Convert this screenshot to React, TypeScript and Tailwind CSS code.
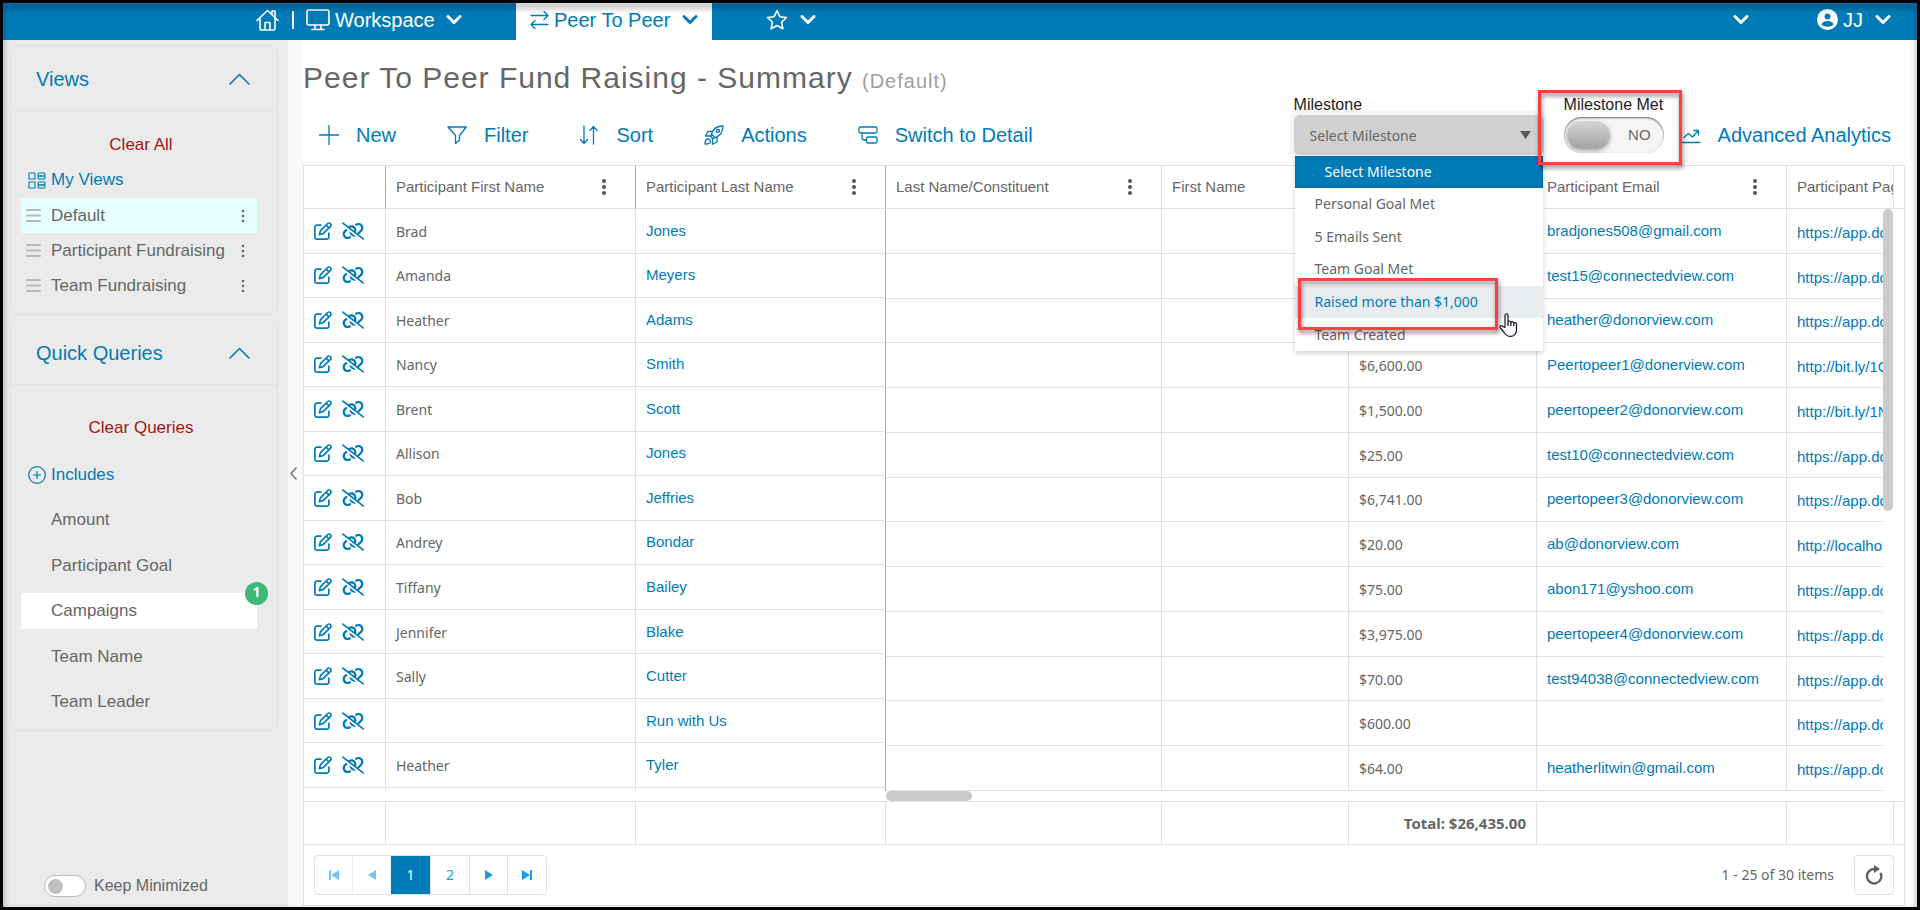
import { useState } from "react";
import type { ReactNode } from "react";
import { FaLinkSlash, FaRegPenToSquare } from "react-icons/fa6";

const SANS = "font-['Liberation_Sans',Arial,sans-serif]";
const NOTO = "font-['Noto_Sans',sans-serif]";

const rows = [
    { first: "Brad", last: "Jones", amount: "", email: "bradjones508@gmail.com", page: "https://app.donorview.com" },
    { first: "Amanda", last: "Meyers", amount: "", email: "test15@connectedview.com", page: "https://app.donorview.com" },
    { first: "Heather", last: "Adams", amount: "", email: "heather@donorview.com", page: "https://app.donorview.com" },
    { first: "Nancy", last: "Smith", amount: "$6,600.00", email: "Peertopeer1@donerview.com", page: "http://bit.ly/1OqTz" },
    { first: "Brent", last: "Scott", amount: "$1,500.00", email: "peertopeer2@donorview.com", page: "http://bit.ly/1NqTz" },
    { first: "Allison", last: "Jones", amount: "$25.00", email: "test10@connectedview.com", page: "https://app.donorview.com" },
    { first: "Bob", last: "Jeffries", amount: "$6,741.00", email: "peertopeer3@donorview.com", page: "https://app.donorview.com" },
    { first: "Andrey", last: "Bondar", amount: "$20.00", email: "ab@donorview.com", page: "http://localhost" },
    { first: "Tiffany", last: "Bailey", amount: "$75.00", email: "abon171@yshoo.com", page: "https://app.donorview.com" },
    { first: "Jennifer", last: "Blake", amount: "$3,975.00", email: "peertopeer4@donorview.com", page: "https://app.donorview.com" },
    { first: "Sally", last: "Cutter", amount: "$70.00", email: "test94038@connectedview.com", page: "https://app.donorview.com" },
    { first: "", last: "Run with Us", amount: "$600.00", email: "", page: "https://app.donorview.com" },
    { first: "Heather", last: "Tyler", amount: "$64.00", email: "heatherlitwin@gmail.com", page: "https://app.donorview.com" },
];

const milestones = ["Personal Goal Met", "5 Emails Sent", "Team Goal Met", "Raised more than $1,000", "Team Created"];

function Svg({ w = 20, h = 20, sw = 1.3, className = "", children }: { w?: number, h?: number, sw?: number, className?: string, children: ReactNode }) {
    return (
        <svg width={w} height={h} viewBox={`0 0 ${w} ${h}`} fill="none" stroke="currentColor" strokeWidth={sw} strokeLinecap="round" strokeLinejoin="round" className={`shrink-0 ${className}`} aria-hidden="true">
            {children}
        </svg>
    )
}

function ChevronDown() {
    return <Svg w={16} h={11} sw={3}><path d="M2 2.5 8 8.5 14 2.5" /></Svg>
}

function TopBar() {
    return (
        <header className="flex h-[37px] shrink-0 items-stretch bg-[#007bb8] text-xl leading-6 text-white">
            <nav className="flex flex-1 items-stretch pl-[253px]">
                <div className="flex w-[260px] items-center pb-1">
                    <a href="#home" aria-label="Home">
                        <Svg w={23} h={22} sw={1.6}>
                            <path d="M1 11.5 11.5 1.5 22 11.5M4 9v10.5a1.5 1.5 0 0 0 1.5 1.5h12a1.5 1.5 0 0 0 1.5-1.5V9M9 21v-7.5h5V21M16 5.5V2h3v6.500" />
                        </Svg>
                    </a>
                    <span className="ml-[13px] h-[18px] w-[2px] bg-white" />
                    <button className="ml-3 flex items-center">
                        <Svg w={24} h={22} sw={1.6}>
                            <rect x="1" y="1" width="22" height="15" rx="2" />
                            <path d="M9 16v4M15 16v4M6 20.500h12" />
                        </Svg>
                        <span className="ml-[5px] mr-[11px]">Workspace</span>
                        <ChevronDown />
                    </button>
                </div>
                <button className="flex w-[196px] items-center bg-white pb-1 pl-3.5 text-[#007bb8]">
                    <Svg w={19} h={20}>
                        <path d="M1 5.500h17M14 1.500l4 4-4 4M18 14.500H1M5 10.500l-4 4 4 4" />
                    </Svg>
                    <span className="ml-[5px] mr-3">Peer To Peer</span>
                    <ChevronDown />
                </button>
                <button className="ml-[54px] flex items-center gap-3 pb-1" aria-label="Favorites">
                    <Svg w={22} h={22} sw={1.6}>
                        <path d="m11 1.500 2.900 6.200 6.600.8-4.900 4.600 1.300 6.700L11 16.500l-5.900 3.300 1.300-6.700L1.500 8.500l6.600-.8z" />
                    </Svg>
                    <ChevronDown />
                </button>
            </nav>
            <div className="flex items-center pb-1 pr-[26px]">
                <button aria-label="More"><ChevronDown /></button>
                <button className="ml-[68px] flex items-center">
                    <svg width="21" height="21" viewBox="0 0 21 21" aria-hidden="true">
                        <circle cx="10.500" cy="10.500" r="10.500" fill="#fff" />
                        <circle cx="10.500" cy="7.500" r="3" fill="#007bb8" />
                        <path d="M4.500 15.500c1-3 3-3.500 6-3.500s5 .5 6 3.500c-3 3-9 3-12 0z" fill="#007bb8" />
                    </svg>
                    <span className="ml-[5px] mr-3">JJ</span>
                    <ChevronDown />
                </button>
            </div>
        </header>
    )
}

function PanelHeader({ title }: { title: string }) {
    return (
        <button className="flex h-[65px] w-full items-center justify-between border-b border-[#dfe1e6] pl-[25px] pr-[27px] pt-0.5 text-xl text-[#007bb8]">
            {title}
            <Svg w={21} h={12} sw={1.6}><path d="M1 11 10.500 1.500 20 11" /></Svg>
        </button>
    )
}

function ViewItem({ label, active = false }: { label: string, active?: boolean }) {
    return (
        <li className={`flex h-[35px] items-center pl-[5px] pr-3 ${active ? "bg-[#e6ffff]" : ""}`}>
            <Svg w={15} h={13} sw={2} className="text-[#b9b9b9]"><path d="M1 1h13M1 6.500h13M1 12h13" /></Svg>
            <a href="#view" className="ml-2.5 flex-1">{label}</a>
            <button aria-label={`${label} options`}>
                <svg width="4" height="14" viewBox="0 0 4 14" fill="#666" aria-hidden="true"><circle cx="2" cy="2" r="1.300" /><circle cx="2" cy="7" r="1.300" /><circle cx="2" cy="12" r="1.300" /></svg>
            </button>
        </li>
    )
}

function Sidebar() {
    const queries = ["Amount", "Participant Goal", "Campaigns", "Team Name", "Team Leader"];
    return (
        <aside className="flex w-[285px] shrink-0 flex-col bg-[#ebebeb] pl-[7px] pr-2.5 pt-[5px] text-[17px] leading-5 text-[#666]">
            <section className="rounded-lg border border-[#dfe1e6] pb-[11px]">
                <PanelHeader title="Views" />
                <button className="mx-auto mt-6 block pr-1.5 text-[#a31515]">Clear All</button>
                <a href="#my-views" className="mb-2 ml-[17px] mt-[15px] flex items-center text-[#007bb8]">
                    <Svg w={18} h={17} sw={1.1}>
                        <rect x="1" y="1" width="6" height="6" /><rect x="1" y="10" width="6" height="6" />
                        <rect x="10" y="1" width="7" height="3" rx="1" /><rect x="10" y="4" width="7" height="3" rx="1" />
                        <rect x="10" y="10" width="7" height="3" rx="1" /><rect x="10" y="13" width="7" height="3" rx="1" />
                    </Svg>
                    <span className="ml-[5px]">My Views</span>
                </a>
                <ul className="ml-2.5 mr-5">
                    <ViewItem label="Default" active />
                    <ViewItem label="Participant Fundraising" />
                    <ViewItem label="Team Fundraising" />
                </ul>
            </section>
            <section className="mt-[5px] rounded-lg border border-t-0 border-[#dfe1e6] pb-2.5">
                <PanelHeader title="Quick Queries" />
                <button className="mx-auto mt-[33px] block pr-1.5 text-[#a31515]">Clear Queries</button>
                <button className="ml-[17px] mt-[27px] flex items-center text-[#007bb8]">
                    <Svg w={18} h={18} sw={1.2}><circle cx="9" cy="9" r="8.300" /><path d="M5.500 9h7M9 5.500v7" /></Svg>
                    <span className="ml-[5px]">Includes</span>
                </button>
                <ul className="ml-2.5 mr-5 mt-[17px] flex h-[218px] flex-col justify-between">
                    {queries.map((q) => (
                        <li key={q} className={`relative flex h-9 items-center pl-[30px] ${q === "Campaigns" ? "bg-white" : ""}`}>
                            <a href="#query">{q}</a>
                            {q === "Campaigns" && (
                                <span className={`absolute -right-[11px] -top-[11px] size-[23px] rounded-full bg-[#3cb878] text-center text-sm font-bold leading-5 text-white ${NOTO}`}>1</span>
                            )}
                        </li>
                    ))}
                </ul>
            </section>
            <label className="mb-2.5 ml-[34px] mt-auto flex items-center gap-2 text-base leading-5">
                <input type="checkbox" className="peer sr-only" />
                <span className="flex h-[22px] w-[42px] items-center rounded-full border border-[#bbb] bg-white pl-[3px]">
                    <span className="size-[15px] rounded-full bg-[#bfbfbf]" />
                </span>
                Keep Minimized
            </label>
        </aside>
    )
}

function ToolButton({ label, children }: { label: string, children: ReactNode }) {
    return (
        <button className="flex items-center gap-[17px] text-xl leading-6 text-[#007bb8]">
            {children}
            {label}
        </button>
    )
}

function MilestoneSelect() {
    const [value, setValue] = useState("Select Milestone");
    return (
        <div className="relative w-[250px]">
            <label htmlFor="milestone" className="block text-base leading-5 text-[#222]">Milestone</label>
            <div className="relative">
                <select id="milestone" value={value} onChange={(e) => setValue(e.target.value)} className={`h-10 w-full appearance-none rounded-md bg-[#d0d0d0] px-4 pt-0.5 text-sm text-[#666] ring-4 ring-[#f5f5f5] ${NOTO}`}>
                    <option>Select Milestone</option>
                    {milestones.map((m) => <option key={m}>{m}</option>)}
                </select>
                <svg width="11" height="8" viewBox="0 0 11 8" className="pointer-events-none absolute right-[13px] top-4" aria-hidden="true"><path d="M0 0h11L5.500 8z" fill="#5a5a5a" /></svg>
            </div>
            <ul role="listbox" aria-label="Milestone options" className={`absolute left-px top-[61px] z-10 flex h-[195px] w-[248px] flex-col bg-white text-sm leading-5 text-[#666] shadow-[0_2px_5px_rgba(0,0,0,0.2)] ${NOTO}`}>
                <li role="option" aria-selected="true" className="flex h-8 items-center bg-[#007bb8] pl-[30px] text-white shadow-[inset_0_0_4px_rgba(0,0,0,0.2)]">Select Milestone</li>
                {milestones.map((m) => (
                    <li key={m} role="option" aria-selected="false" className={`relative flex flex-1 items-center pl-5 ${m.startsWith("Raised") ? "z-10 bg-[#e9ecef] text-[#007bb8]" : ""}`}>
                        {m}
                        {m.startsWith("Raised") && (
                            <>
                                <span className="pointer-events-none absolute -top-2 left-[3px] h-[52px] w-[200px] border-[3px] border-[#ff4040] drop-shadow-[1px_3px_2px_rgba(0,0,0,0.5)]" />
                                <svg width="20" height="25" viewBox="0 0 20 25" className="absolute left-[204px] top-[27px]" fill="#fff" stroke="#223" strokeWidth="1.300" strokeLinejoin="round" aria-hidden="true">
                                    <path d="M6 14.500V2.600c0-2.200 3-2.200 3 0v7c0-1.900 2.800-1.900 2.900.3 0-1.800 2.700-1.700 2.800.6.200-1.500 2.800-1.300 2.800 1V17c0 3.500-2.500 6.500-6 6.500-3 0-4.500-1.300-6-3.500l-4-5c-1.300-1.800.6-3.300 2.200-1.700z" />
                                    <path d="M9 9.500V13M11.900 10v3M14.700 10.500V13" />
                                </svg>
                            </>
                        )}
                    </li>
                ))}
            </ul>
        </div>
    )
}

function PageHeader() {
    return (
        <div className="flex h-[125px] shrink-0 justify-between">
            <div className="flex flex-col justify-between pb-[18px] pt-[18px]">
                <h1 className="text-3xl leading-10 tracking-[1px] text-[#666]">
                    Peer To Peer Fund Raising - Summary <small className="text-xl text-[#a0a0a0]">(Default)</small>
                </h1>
                <div className="flex gap-[51px] pl-4">
                    <ToolButton label="New"><Svg><path d="M10 .5v19M.5 10h19" /></Svg></ToolButton>
                    <ToolButton label="Filter"><Svg><path d="M1 2h18.300L12.500 10.500V15l-4 3.500v-8z" /></Svg></ToolButton>
                    <ToolButton label="Sort"><Svg><path d="M5 1v17.500M1.500 14.500l3.500 4 3.500-4M14.500 19V1.500M11 5.500l3.500-4 3.500 4" /></Svg></ToolButton>
                    <ToolButton label="Actions">
                        <Svg>
                            <path d="M7.500 9C9 4 12.500 1 19 1c0 6-3 10-8 11.800zM8 6.500H4L1.500 11h5.800M13 12.300V17l-4.500 2.200v-5.700M7.500 9 7 12l1.500 1.500 2.500-.7M1 19c0-3 .5-5 3-5s3 3 1.500 4.200C4.500 19 3 19 1 19z" />
                            <circle cx="14" cy="6" r="1.500" />
                        </Svg>
                    </ToolButton>
                    <ToolButton label="Switch to Detail">
                        <Svg>
                            <rect x="1" y="2" width="18" height="6" rx="1.500" />
                            <rect x="8.500" y="12" width="10.500" height="6" rx="1.500" />
                            <path d="M4 8v4.500a2.500 2.500 0 0 0 2.500 2.500h2" />
                        </Svg>
                    </ToolButton>
                </div>
            </div>
            <div className="flex items-end pr-[14px]">
                <div className="pb-2.5"><MilestoneSelect /></div>
                <div className="relative ml-5 w-[100px] pb-3">
                    <label htmlFor="met" className="block pb-0.5 text-base leading-5 text-[#222]">Milestone Met</label>
                    <button id="met" role="switch" aria-checked="false" className="flex h-9 w-full items-center justify-between rounded-full bg-[#f5f5f5] pl-[3px] pr-[13px] text-[15px] text-[#666] shadow-[inset_0_1px_2px_rgba(0,0,0,0.6)]">
                        <span className="h-7 w-[43px] rounded-full bg-linear-to-b from-[#d6d6d6] to-[#a3a3a3] shadow-[0_2px_4px_rgba(0,0,0,0.3)]" />
                        NO
                    </button>
                    <span className="pointer-events-none absolute -left-[26px] -top-[5px] z-20 h-[75px] w-[144px] border-[3px] border-[#ff4040] drop-shadow-[1px_3px_2px_rgba(0,0,0,0.5)]" />
                </div>
                <a href="#analytics" className="ml-[17px] flex items-center gap-[17px] pb-[18px] text-xl leading-6 text-[#007bb8]">
                    <Svg><path d="M1 17.500h18M3 12.500l4.500-4 4 3.500L17 6M13 5.500h4.500v4.500" /></Svg>
                    Advanced Analytics
                </a>
            </div>
        </div>
    )
}

function HeadCell({ label, edge = "border-[#dfe1e6]", menu = true }: { label: string, edge?: string, menu?: boolean }) {
    return (
        <th scope="col" className={`h-[42px] border-r p-0 pl-2.5 font-normal ${edge}`}>
            <div className="flex items-center justify-between pr-[29px]">
                {label}
                {menu && (
                    <button aria-label={`${label} menu`}>
                        <svg width="4" height="16" viewBox="0 0 4 16" fill="#555" aria-hidden="true"><circle cx="2" cy="2" r="2" /><circle cx="2" cy="8" r="2" /><circle cx="2" cy="14" r="2" /></svg>
                    </button>
                )}
            </div>
        </th>
    )
}

function LockedCols() {
    return <colgroup><col className="w-[82px]" /><col className="w-[250px]" /><col className="w-[250px]" /></colgroup>
}

function ScrollCols() {
    return <colgroup><col className="w-[276px]" /><col className="w-[187px]" /><col className="w-[188px]" /><col className="w-[250px]" /><col className="w-[250px]" /></colgroup>
}

const table = "table-fixed border-separate border-spacing-0 whitespace-nowrap text-left";
const cell = "border-b border-r border-[#dfe1e6] p-0 pl-2.5";
const footCell = "h-[42px] border-r border-[#dfe1e6] p-0 pr-2.5 text-right";

function Grid() {
    return (
        <div className="mb-px flex min-h-0 flex-1 flex-col border border-[#dfe1e6] text-[15px] leading-5 text-[#666]">
            <div className="flex h-[43px] shrink-0 border-b border-[#dfe1e6]">
                <table className={`${table} w-[582px] shrink-0`}>
                    <LockedCols />
                    <thead>
                        <tr>
                            <td className="border-r border-[#aaa] p-0" />
                            <HeadCell label="Participant First Name" edge="border-[#aaa]" />
                            <HeadCell label="Participant Last Name" edge="border-[#aaa]" />
                        </tr>
                    </thead>
                </table>
                <div className="min-w-0 flex-1 overflow-hidden">
                    <table className={`${table} w-[1151px]`}>
                        <ScrollCols />
                        <thead>
                            <tr>
                                <HeadCell label="Last Name/Constituent" />
                                <HeadCell label="First Name" menu={false} />
                                <HeadCell label="" menu={false} />
                                <HeadCell label="Participant Email" />
                                <HeadCell label="Participant Page" menu={false} />
                            </tr>
                        </thead>
                    </table>
                </div>
                <div className="w-[11px] border-l border-[#dfe1e6]" />
            </div>

            <div className="flex min-h-0 flex-1">
                <div className="mb-2.5 w-[582px] shrink-0 overflow-hidden">
                    <table className={`${table} h-[579px] w-full`}>
                        <LockedCols />
                        <tbody>
                            {rows.map((r, i) => (
                                <tr key={i}>
                                    <td className={cell}>
                                        <div className="flex items-center gap-2.5 text-[#007bb8]">
                                            <button aria-label="Edit"><FaRegPenToSquare size={18} /></button>
                                            <button aria-label="Unlink"><FaLinkSlash size={22} /></button>
                                        </div>
                                    </td>
                                    <td className={`${cell} pt-0.5 text-sm ${NOTO}`}>{r.first}</td>
                                    <td className={`${cell} border-r-[#aaa]`}><a href="#participant" className="text-[#007bb8]">{r.last}</a></td>
                                </tr>
                            ))}
                        </tbody>
                    </table>
                    <table className={`${table} w-full`} aria-hidden="true">
                        <LockedCols />
                        <tbody><tr className="h-11"><td className={cell} /><td className={cell} /><td className={`${cell} border-r-[#aaa]`} /></tr></tbody>
                    </table>
                </div>
                <div className="flex min-w-0 flex-1 flex-col">
                    <div className="flex min-h-0 flex-1">
                        <div className="min-w-0 flex-1 overflow-hidden">
                            <table className={`${table} h-[582px] w-[1151px]`}>
                                <ScrollCols />
                                <tbody>
                                    {rows.map((r, i) => (
                                        <tr key={i}>
                                            <td className={cell} />
                                            <td className={cell} />
                                            <td className={`${cell} pt-0.5 text-sm ${NOTO}`}>{r.amount}</td>
                                            <td className={cell}>{r.email && <a href="#email" className="text-[#007bb8]">{r.email}</a>}</td>
                                            <td className={`${cell} pt-1`}><a href="#page" className="text-[#007bb8]">{r.page}</a></td>
                                        </tr>
                                    ))}
                                </tbody>
                            </table>
                        </div>
                        <div className="mr-[11px] w-2.5"><div className="h-[302px] rounded-full bg-[#cbcbcb]" /></div>
                    </div>
                    <div className="h-2.5 shrink-0"><div className="h-2.5 w-[86px] rounded-full bg-[#cbcbcb]" /></div>
                </div>
            </div>

            <div className="flex h-[43px] shrink-0 border-t border-[#dfe1e6]">
                <table className={`${table} w-[582px] shrink-0`}>
                    <LockedCols />
                    <tbody><tr><td className={footCell} /><td className={footCell} /><td className={footCell} /></tr></tbody>
                </table>
                <div className="min-w-0 flex-1 overflow-hidden">
                    <table className={`${table} w-[1151px]`}>
                        <ScrollCols />
                        <tbody>
                            <tr>
                                <td className={footCell} />
                                <td className={footCell} />
                                <td className={`${footCell} text-[15px] font-bold ${NOTO}`}>Total: $26,435.00</td>
                                <td className={footCell} />
                                <td className={footCell} />
                            </tr>
                        </tbody>
                    </table>
                </div>
                <div className="w-[11px] border-l border-[#dfe1e6]" />
            </div>
            <Pager />
        </div>
    )
}

function Pager() {
    return (
        <div className={`flex h-[61px] shrink-0 items-center justify-between border-t border-[#dfe1e6] px-2.5 text-sm ${NOTO}`}>
            <div className="flex h-10 divide-x divide-[#dfe1e6] overflow-hidden rounded border border-[#dfe1e6] text-[#1b9fe0]">
                <button className="flex w-[38px] items-center justify-center opacity-60" aria-label="First page"><svg width="10" height="10" viewBox="0 0 10 10" fill="currentColor"><path d="M0 0h2v10H0zM10 0v10L2 5z" /></svg></button>
                <button className="flex w-[38px] items-center justify-center opacity-60" aria-label="Previous page"><svg width="8" height="10" viewBox="0 0 8 10" fill="currentColor"><path d="M8 0v10L0 5z" /></svg></button>
                <button className="w-10 bg-[#007bb8] text-white">1</button>
                <button className="w-[39px]">2</button>
                <button className="flex w-[38px] items-center justify-center" aria-label="Next page"><svg width="8" height="10" viewBox="0 0 8 10" fill="currentColor"><path d="M0 0v10L8 5z" /></svg></button>
                <button className="flex w-[38px] items-center justify-center" aria-label="Last page"><svg width="10" height="10" viewBox="0 0 10 10" fill="currentColor"><path d="M8 0h2v10H8zM0 0v10L8 5z" /></svg></button>
            </div>
            <div className="flex items-center gap-5">
                <span>1 - 25 of 30 items</span>
                <button className="flex size-10 items-center justify-center rounded border border-[#dfe1e6]" aria-label="Refresh">
                    <svg width="18" height="20" viewBox="0 0 18 20" fill="none" stroke="#5f5f5f" strokeWidth="2.400" aria-hidden="true">
                        <path d="M9.500 4A7.200 7.200 0 1 0 15.500 7.800" />
                        <path d="M9 0v8l6-4z" fill="#5f5f5f" stroke="none" />
                    </svg>
                </button>
            </div>
        </div>
    )
}

export default function App() {
    return (
        <div className={`relative flex h-screen flex-col overflow-hidden bg-white p-[3px] ${SANS}`}>
            <TopBar />
            <div className="flex min-h-0 flex-1">
                <Sidebar />
                <div className="flex w-[15px] shrink-0 items-center bg-[#f9f9f9] pl-px text-[#777]">
                    <button aria-label="Collapse sidebar"><Svg w={8} h={13} sw={1.6}><path d="M7 1 2 6.500 7 12" /></Svg></button>
                </div>
                <main className="flex min-w-0 flex-1 flex-col pr-3">
                    <PageHeader />
                    <Grid />
                </main>
            </div>
            <div className="pointer-events-none absolute inset-0 z-30 border-[3px] border-black drop-shadow-[0_4px_3px_rgba(0,0,0,0.5)]" />
        </div>
    )
}
